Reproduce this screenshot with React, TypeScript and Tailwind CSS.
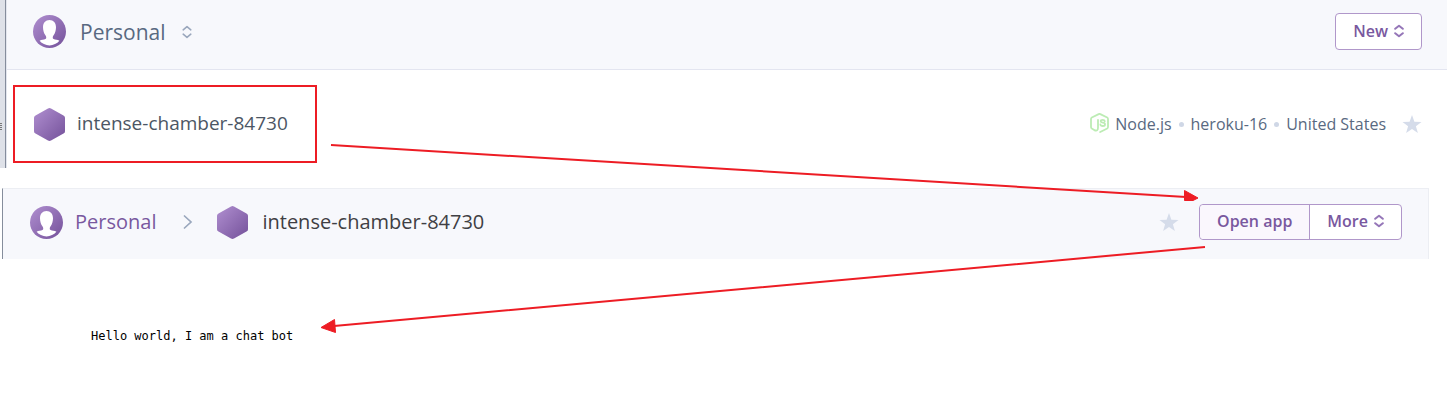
import React from "react";

const RED = "#ed1c24";

function Avatar() {
  return (
    <svg className="size-[33px] shrink-0" viewBox="0 0 33 33" aria-hidden="true">
      <defs>
        <linearGradient id="avatarFill" x1="0" y1="0" x2="1" y2="1">
          <stop offset="0" stopColor="#b08fd0" />
          <stop offset="1" stopColor="#74519a" />
        </linearGradient>
      </defs>
      <circle cx="16.5" cy="16.5" r="16.5" fill="url(#avatarFill)" />
      <path
        d="M16.5 5C12.500 5 10 8 10 12.200C10 15.300 11 18.300 12.400 20.200C13.400 21.600 13.700 23.400 12.400 24C10.800 24.700 8.400 24.500 6.600 25.800C9 28.600 12.600 30.400 16.500 30.400C20.400 30.400 24 28.600 26.400 25.800C24.600 24.500 22.200 24.700 20.600 24C19.300 23.400 19.600 21.600 20.600 20.200C22 18.300 23 15.300 23 12.200C23 8 20.500 5 16.500 5Z"
        fill="#fff"
      />
    </svg>
  );
}

function Hexagon() {
  return (
    <svg className="h-[33px] w-[31px] shrink-0" viewBox="0 0 31 33" aria-hidden="true">
      <defs>
        <linearGradient id="hexFill" x1="0" y1="0" x2="1" y2="1">
          <stop offset="0" stopColor="#b08fd0" />
          <stop offset="1" stopColor="#74519a" />
        </linearGradient>
      </defs>
      <path
        d="M14 .5Q15.500 -.3 17 .5L29.500 7.400Q31 8.200 31 9.800V23.200Q31 24.800 29.500 25.600L17 32.500Q15.500 33.300 14 32.500L1.500 25.600Q0 24.800 0 23.200V9.800Q0 8.200 1.500 7.400Z"
        fill="url(#hexFill)"
      />
    </svg>
  );
}

function Sorter({ bold = false }: { bold?: boolean }) {
  return (
    <svg className="h-3.5 w-2.5 shrink-0" viewBox="0 0 10 14" fill="none" stroke="currentColor" strokeWidth={bold ? 2 : 1.6} strokeLinecap="round" strokeLinejoin="round" aria-hidden="true">
      <path d="M1.200 4.800L5 1.700L8.800 4.800M1.200 9.200L5 12.300L8.800 9.200" />
    </svg>
  );
}

function Star() {
  return (
    <svg className="h-[18px] w-5" viewBox="0 0 20 18" fill="#d5dcea" aria-hidden="true">
      <path d="M10 0L12.400 6.700L19.500 6.900L13.900 11.200L15.900 18L10 14L4.100 18L6.100 11.200L.5 6.900L7.600 6.700Z" />
    </svg>
  );
}

function NodeLogo() {
  return (
    <svg className="mb-0.5 h-5 w-[19px] shrink-0" viewBox="0 0 19 20" fill="none" stroke="#bcecb4" strokeWidth="1.800" strokeLinejoin="round" strokeLinecap="round" aria-hidden="true">
      <path d="M5 17.400L1.800 15.500Q1 15 1 14.100V5.900Q1 5 1.800 4.500L8.700 1.100Q9.500 .7 10.300 1.100L17.200 4.500Q18 5 18 5.900V14.100Q18 15 17.200 15.500L10.200 19" />
      <path d="M8 6.800V14.500Q8 18.400 5 17.400" />
      <path d="M14.800 8.200Q14.500 6.900 12.700 6.900Q10.700 6.900 10.700 8.300Q10.700 9.400 12.800 9.700Q15 10 15 11.400Q15 13 12.800 13Q10.500 13 10.400 11.500" />
    </svg>
  );
}

function Dot() {
  return <span className="mx-px size-[5px] rounded-full bg-[#cfd7e6]" />;
}

export default function App() {
  return (
    <main className="relative min-h-screen bg-white font-['Open_Sans',sans-serif]">
      <section className="flex h-[168px]">
        <div className="flex w-1.5 shrink-0 flex-col items-start justify-center gap-px border-r border-[#858d9c] bg-[#dee1e8] pt-[85px]">
          <span className="h-px w-0.5 bg-[#777]" />
          <span className="h-px w-0.5 bg-[#777]" />
          <span className="h-px w-0.5 bg-[#777]" />
          <span className="h-px w-0.5 bg-[#777]" />
        </div>
        <div className="flex-1 border-l border-[#e3e6ee]">
          <header className="mr-[3px] flex h-[70px] items-center justify-between border-b border-[#e3e5f0] bg-[#f7f8fc] pr-[25px] pb-1.5 pl-[26px]">
            <button type="button" className="flex items-center text-[#596981]">
              <Avatar />
              <span className="ml-3.5 text-[21px] leading-8">Personal</span>
              <span className="ml-4 text-[#9aa7bd]"><Sorter /></span>
            </button>
            <button type="button" className="flex h-[37px] items-center gap-1.5 rounded border border-[#b097ca] bg-white px-[17px] pb-0.5 text-base font-semibold text-[#79589f]">
              New
              <span className="text-[#9576b8]"><Sorter bold /></span>
            </button>
          </header>
          <div className="flex items-center justify-between pt-[15px] pr-7 pl-1.5">
            <a href="#app" className="flex h-[78px] w-[304px] items-center gap-3 border-2 border-[#ed1c24] pl-[19px] text-[19px] text-[#4c5664]">
              <Hexagon />
              <span className="pb-0.5">intense-chamber-84730</span>
            </a>
            <div className="flex items-center gap-1.5 text-base text-[#596981]">
              <NodeLogo />
              <span>Node.js</span>
              <Dot />
              <span>heroku-16</span>
              <Dot />
              <span>United States</span>
              <button type="button" aria-label="Favorite" className="ml-2.5"><Star /></button>
            </div>
          </div>
        </div>
      </section>

      <section className="mt-5 mr-[21px] ml-0.5 flex h-[71px] items-center justify-between border-t border-r border-l border-t-[#eceef3] border-r-[#eceef3] border-l-[#858d9c] bg-[#f7f8fc] pr-[26px] pb-1 pl-[27px]">
        <nav className="flex items-center text-xl">
          <a href="#personal" className="flex items-center gap-3 text-[#79589f]">
            <Avatar />
            Personal
          </a>
          <svg className="mr-6 ml-[27px] h-3.5 w-2.5" viewBox="0 0 10 14" fill="none" stroke="#9aa7bd" strokeWidth="1.700" strokeLinecap="round" aria-hidden="true">
            <path d="M1.500 1L8 7L1.500 13" />
          </svg>
          <span className="flex items-center gap-3.5 text-[#3f3f44]">
            <Hexagon />
            intense-chamber-84730
          </span>
        </nav>
        <div className="flex items-center gap-5">
          <button type="button" aria-label="Favorite"><Star /></button>
          <div className="flex h-9 rounded border border-[#b097ca] bg-white text-base font-semibold text-[#79589f]">
            <button type="button" className="rounded-l border-r border-[#b097ca] bg-[#faf7fd] px-[17px] pb-0.5">Open app</button>
            <button type="button" className="flex items-center gap-1.5 px-[17px] pb-0.5">
              More
              <span className="text-[#9576b8]"><Sorter bold /></span>
            </button>
          </div>
        </div>
      </section>

      <pre className="mt-[68px] ml-[91px] font-['DejaVu_Sans_Mono',monospace] text-xs leading-[18px] text-black">Hello world, I am a chat bot</pre>

      <svg className="pointer-events-none absolute top-0 left-0 h-[402px] w-[1450px]" viewBox="0 0 1450 402" fill={RED} stroke={RED} aria-hidden="true">
        <path d="M331 145L1186 197M1205 247L334 326" strokeWidth="2" />
        <path d="M1184.500 190.500L1198 198L1193 200.500H1184.500Z" strokeWidth="1" />
        <path d="M321 327.500L334.500 319.500L335.500 332.500Z" strokeWidth="1" />
      </svg>
    </main>
  );
}
